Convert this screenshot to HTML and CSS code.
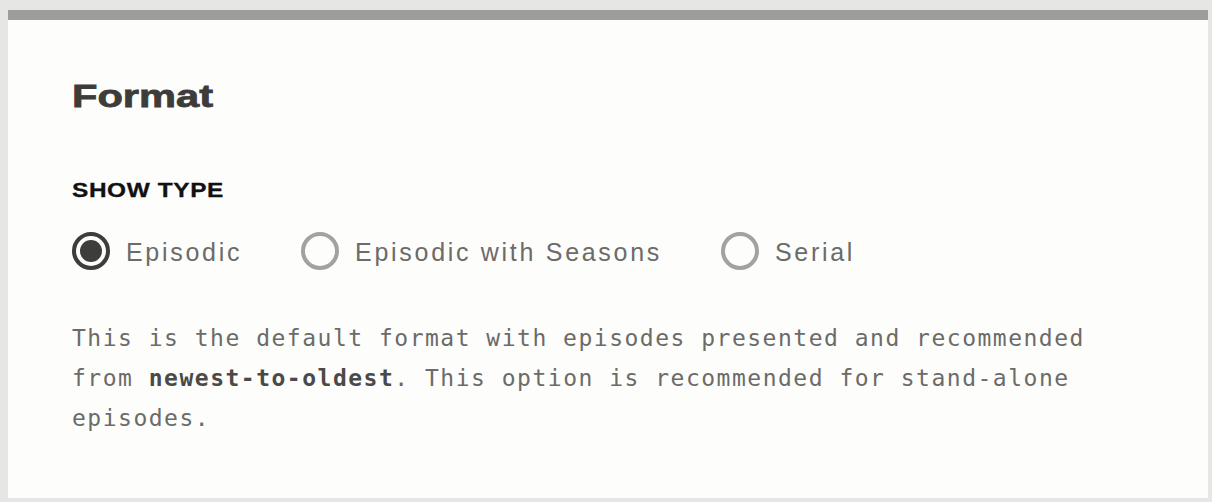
FILE: index.html
```html
<!DOCTYPE html>
<html lang="en">

<head>
    <meta charset="UTF-8">
    <meta name="viewport" content="width=device-width, initial-scale=1.0">
    <title>Format</title>
    <link rel="stylesheet" href="styles.css">
</head>

<body>

    <section class="format-card">
        <h2 class="card-title"><span>Format</span></h2>

        <div class="field">
            <div class="field-label"><span>SHOW TYPE</span></div>

            <div class="radio-group">
                <label class="radio checked">
                    <span class="radio-mark"></span>
                    <span class="radio-text">Episodic</span>
                </label>
                <label class="radio">
                    <span class="radio-mark"></span>
                    <span class="radio-text">Episodic with Seasons</span>
                </label>
                <label class="radio">
                    <span class="radio-mark"></span>
                    <span class="radio-text">Serial</span>
                </label>
            </div>

            <p class="help-text">This is the default format with episodes presented and recommended from <b>newest-to-oldest</b>. This option is recommended for stand-alone episodes.</p>
        </div>
    </section>

</body>

</html>
```

FILE: styles.css
```css
body {
    margin: 10px 4px 0 8px;
    background-color: #e6e6e4;
    font-family: 'Liberation Sans', Arial, sans-serif;
}

.format-card {
    background-color: #fdfdfb;
    border-top: 10px solid #9d9d9b;
    padding: 56px 64px 60px 64px;
}

.card-title {
    margin: 0;
    font-size: 32px;
    line-height: 40px;
    font-weight: bold;
    color: #3c3c3a;
}

.card-title span {
    display: inline-block;
    -webkit-text-stroke: 0.8px #3c3c3a;
    transform: scaleX(1.3);
    transform-origin: left center;
}

.field {
    margin-top: 62px;
}

.field-label {
    font-size: 20px;
    line-height: 24px;
    font-weight: bold;
    color: #111111;
}

.field-label span {
    display: inline-block;
    letter-spacing: 0.5px;
    -webkit-text-stroke: 0.3px #111111;
    transform: scaleX(1.22);
    transform-origin: left center;
}

.radio-group {
    display: flex;
    align-items: center;
    gap: 59px;
    margin-top: 30px;
}

.radio {
    display: flex;
    align-items: center;
    gap: 16px;
    cursor: pointer;
}

.radio-mark {
    width: 38px;
    height: 38px;
    box-sizing: border-box;
    border: 4px solid #a2a2a0;
    border-radius: 50%;
    display: flex;
    align-items: center;
    justify-content: center;
}

.radio.checked .radio-mark {
    border-color: #3d3d3b;
}

.radio.checked .radio-mark::after {
    content: "";
    width: 22px;
    height: 22px;
    border-radius: 50%;
    background-color: #3d3d3b;
}

.radio-text {
    font-size: 25px;
    line-height: 36px;
    padding-top: 2px;
    letter-spacing: 2.7px;
    color: #6b6b69;
}

.help-text {
    margin: 48px 0 0 0;
    max-width: 1075px;
    font-family: 'DejaVu Sans Mono', monospace;
    font-size: 23px;
    line-height: 40px;
    letter-spacing: 1.5px;
    color: #6b6b69;
}

.help-text b {
    color: #4a4a48;
}
```
